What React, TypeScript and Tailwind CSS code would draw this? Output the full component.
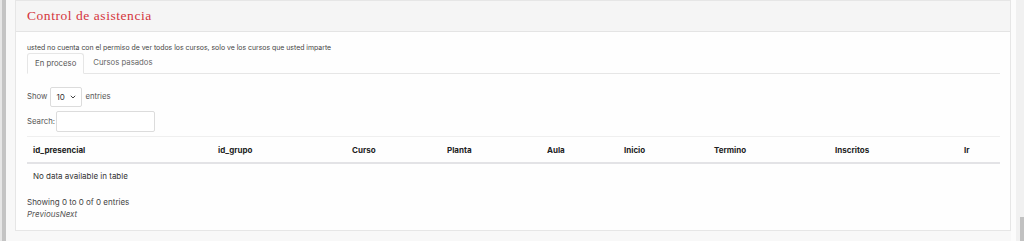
import React from "react";

const cols: [string, number][] = [
  ["id_presencial", 185],
  ["id_grupo", 134],
  ["Curso", 95],
  ["Planta", 100],
  ["Aula", 77],
  ["Inicio", 90],
  ["Termino", 121],
  ["Inscritos", 129],
  ["Ir", 42],
];

export default function App() {
  return (
    <div
      className="flex h-[241px] w-[1024px] overflow-hidden bg-[#f8f8f8] text-[#333]"
      style={{ fontFamily: "Inter, 'Noto Sans', sans-serif" }}
    >
      <div className="w-[2px] bg-[#e6e6e6]" />
      <div className="w-[4px] bg-[#c4c4c4]" />
      <div className="w-[9px]" />
      <div className="flex w-[996px] flex-col">
        <div className="h-[231px] border border-[#e6e6e6] bg-[#fefefe]">
          <div className="flex h-[31px] items-center border-b border-[#e4e4e4] bg-[#f5f5f5] pl-[11px]">
            <span
              className="text-[13.5px] tracking-[0.55px] text-[#d4343c]"
              style={{ fontFamily: "'Liberation Serif', serif" }}
            >
              Control de asistencia
            </span>
          </div>
          <div className="px-[11px] pt-[10px]">
            <div className="text-[6.9px] leading-[11px] text-[#444]">
              usted no cuenta con el permiso de ver todos los cursos, solo ve los cursos que usted imparte
            </div>
            <div className="flex h-[21px] w-[973px] border-b border-[#e6e6e6] text-[7.75px] text-[#555]">
              <div className="-mb-px flex items-center rounded-t-[3px] border border-b-[#fefefe] border-[#e6e6e6] bg-[#fefefe] px-[7px]">
                En proceso
              </div>
              <div className="flex items-center px-[9px] text-[#666]">Cursos pasados</div>
            </div>
            <div className="mt-[13px] flex items-center gap-[3px] text-[7.75px] text-[#555]">
              <span>Show</span>
              <div className="flex h-[20px] w-[32px] items-center justify-between rounded-[2px] border border-[#dcdcdc] bg-white px-[5px] text-[#333]">
                <span className="text-[8px]">10</span>
                <svg width="6" height="4" viewBox="0 0 6 4">
                  <path d="M0.8 0.8 L3 3 L5.2 0.8" stroke="#444" strokeWidth="1" fill="none" />
                </svg>
              </div>
              <span>entries</span>
            </div>
            <div className="mt-[4px] flex items-center text-[7.75px] text-[#555]">
              <span>Search:</span>
              <div className="ml-px h-[21px] w-[99px] rounded-[2px] border border-[#dcdcdc] bg-white" />
            </div>
            <table className="mt-[4px] w-[973px] table-fixed border-collapse text-[8px]">
              <colgroup>
                {cols.map(([n, w]) => (
                  <col key={n} style={{ width: w }} />
                ))}
              </colgroup>
              <thead>
                <tr className="border-t border-b-2 border-t-[#efefef] border-b-[#e3e3e6]">
                  {cols.map(([n]) => (
                    <th key={n} className="h-[26px] px-[6px] pt-px text-left font-bold text-[#222]">
                      {n}
                    </th>
                  ))}
                </tr>
              </thead>
              <tbody>
                <tr>
                  <td colSpan={9} className="h-[25px] px-[6px] text-[#333]">
                    No data available in table
                  </td>
                </tr>
              </tbody>
            </table>
            <div className="mt-[8px] text-[8px] leading-[12px] text-[#444]">Showing 0 to 0 of 0 entries</div>
            <div className="text-[8px] italic leading-[12px] text-[#555]">PreviousNext</div>
          </div>
        </div>
      </div>
      <div className="w-[5px] bg-[#fcfcfc]" />
      <div className="relative w-[8px] bg-[#f1f1f1]">
        <div className="absolute left-[4px] top-[217px] h-[24px] w-[4px] bg-[#c1c1c1]" />
      </div>
    </div>
  );
}
